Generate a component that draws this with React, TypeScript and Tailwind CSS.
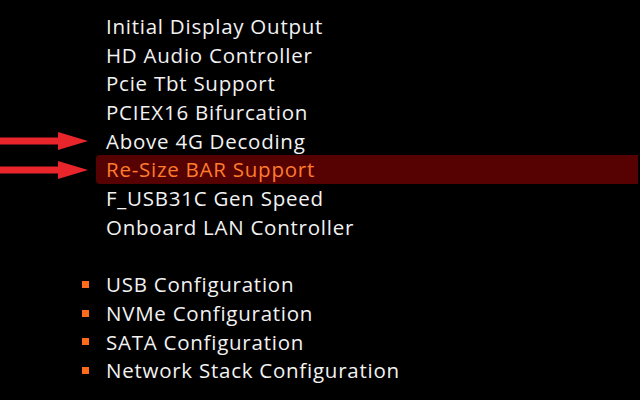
const items = [
    'Initial Display Output',
    'HD Audio Controller',
    'Pcie Tbt Support',
    'PCIEX16 Bifurcation',
    'Above 4G Decoding',
    'Re-Size BAR Support',
    'F_USB31C Gen Speed',
    'Onboard LAN Controller',
]

const submenus = ['USB Configuration', 'NVMe Configuration', 'SATA Configuration', 'Network Stack Configuration']

const arrowRows = [4, 5]
const selected = 5

function Arrow() {
    return (
        <svg width="90" height="20" viewBox="0 0 90 20" className="block">
            <rect x="0" y="6.5" width="62" height="7" fill="#e8252a" />
            <polygon points="58,1 88,10 58,19" fill="#e8252a" />
        </svg>
    )
}

export default function App() {
    return (
        <div
            className="w-[640px] h-[400px] bg-black overflow-hidden pt-[12px] text-[20.5px] tracking-[0.75px] font-medium text-[#f2f2f2]"
            style={{ fontFamily: '"Open Sans", "Noto Sans", sans-serif' }}
        >
            {items.map((label, i) => (
                <div key={label} className="flex items-center h-[28.7px]">
                    <div className="w-[96px] shrink-0 flex items-center">{arrowRows.includes(i) && <Arrow />}</div>
                    <div
                        className={
                            i === selected
                                ? 'flex-1 h-full flex items-center pl-[10px] mr-[2px] rounded-l-[4px] bg-[#560202] text-[#ff7b2e]'
                                : 'flex-1 h-full flex items-center pl-[10px]'
                        }
                    >
                        {label}
                    </div>
                </div>
            ))}
            <div className="h-[28.7px]" />
            {submenus.map((label) => (
                <div key={label} className="flex items-center h-[28.7px]">
                    <div className="w-[106px] shrink-0 flex items-center pl-[82px]">
                        <span className="w-[7px] h-[7px] bg-[#ff6a1c]" />
                    </div>
                    <div>{label}</div>
                </div>
            ))}
        </div>
    )
}
